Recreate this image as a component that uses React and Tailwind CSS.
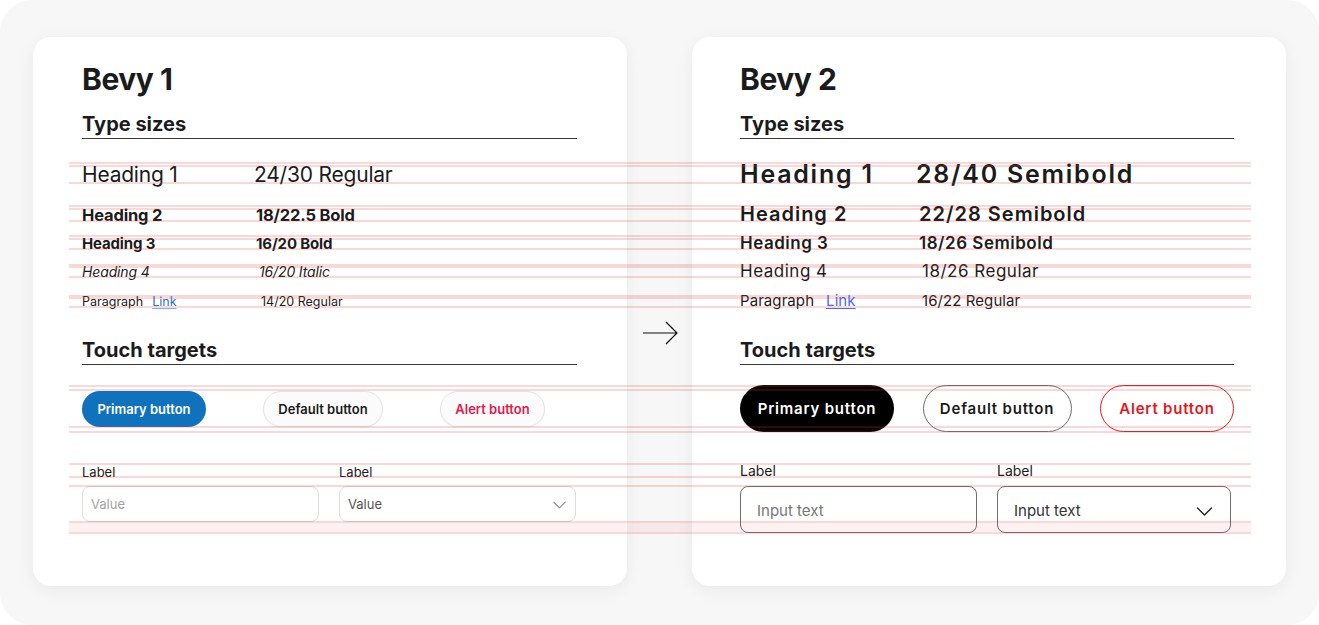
import React from 'react';

// Guide lines laid over both cards (y positions in page pixels)
const guides = [162, 165, 182, 205, 208, 220, 235, 238, 248, 264, 266, 276, 295, 297, 306, 385, 389, 426, 431, 463, 476, 485, 521, 532];

function Chevron({ className }) {
  return (
    <svg viewBox="0 0 16 9" fill="none" className={className}>
      <path d="M1 1l7 7 7-7" stroke="currentColor" strokeWidth="1.4" strokeLinecap="round" strokeLinejoin="round" />
    </svg>
  );
}

function Bevy1() {
  return (
    <div className="w-[594px] h-[549px] shrink-0 rounded-[18px] bg-white shadow-[0_4px_18px_rgba(0,0,0,0.06)] pl-[49px] pr-[50px] pt-[24px] text-[#1b1b1b]">
      <h1 className="text-[30px] leading-[36px] font-bold tracking-[-0.015em]">Bevy 1</h1>
      <h2 className="mt-[15px] text-[20px] leading-[24px] font-bold pb-[2px] border-b border-[#3a3a3a]">Type sizes</h2>

      <div className="mt-[21px] flex text-[21px] leading-[30px] tracking-[-0.01em]">
        <span className="w-[172px]">Heading 1</span>
        <span>24/30 Regular</span>
      </div>
      <div className="mt-[14px] flex text-[16.5px] leading-[22px] font-bold tracking-[-0.01em]">
        <span className="w-[174px]">Heading 2</span>
        <span>18/22.5 Bold</span>
      </div>
      <div className="mt-[7.5px] flex text-[15px] leading-[20px] font-bold tracking-[-0.01em]">
        <span className="w-[174px]">Heading 3</span>
        <span>16/20 Bold</span>
      </div>
      <div className="mt-[8.5px] flex text-[14px] leading-[20px] italic tracking-[-0.01em]">
        <span className="w-[177px]">Heading 4</span>
        <span>16/20 Italic</span>
      </div>
      <div className="mt-[11px] flex text-[12.5px] leading-[18px]">
        <span className="w-[179px]">
          Paragraph
          <a className="ml-[9px] text-[#1f74c4] underline underline-offset-2 decoration-[#7fb1e0]">Link</a>
        </span>
        <span>14/20 Regular</span>
      </div>

      <h2 className="mt-[27px] text-[20px] leading-[24px] font-bold pb-[2px] border-b border-[#3a3a3a]">Touch targets</h2>

      <div className="mt-[26px] flex gap-[57px]">
        <button className="w-[124px] h-[36px] rounded-full bg-[#1071bd] text-white text-[13px] font-semibold pt-[2px]">Primary button</button>
        <button className="w-[120px] h-[36px] rounded-full bg-[#fbfbfb] border border-[#e4e4e4] shadow-[0_1px_2px_rgba(0,0,0,0.04)] text-[#1b1b1b] text-[13px] font-semibold pt-[2px]">Default button</button>
        <button className="w-[105px] h-[36px] rounded-full bg-[#fbfbfb] border border-[#e4e4e4] shadow-[0_1px_2px_rgba(0,0,0,0.04)] text-[#e3184c] text-[13px] font-semibold pt-[2px]">Alert button</button>
      </div>

      <div className="mt-[37px] grid grid-cols-[237px_237px] gap-x-[20px]">
        <div>
          <div className="text-[13px] leading-[16px]">Label</div>
          <div className="mt-[6px] h-[36px] rounded-[8px] border border-[#dedede] flex items-center pl-[8px] pt-[2px] text-[13px] text-[#a3a3a3]">Value</div>
        </div>
        <div>
          <div className="text-[13px] leading-[16px]">Label</div>
          <div className="mt-[6px] h-[36px] rounded-[8px] border border-[#dedede] flex items-center justify-between pl-[8px] pr-[9px] pt-[2px] text-[13px] text-[#555]">
            <span>Value</span>
            <Chevron className="w-[13px] h-[8px] text-[#8a8a8a]" />
          </div>
        </div>
      </div>
    </div>
  );
}

function Bevy2() {
  return (
    <div className="w-[594px] h-[549px] shrink-0 rounded-[18px] bg-white shadow-[0_4px_18px_rgba(0,0,0,0.06)] pl-[48px] pr-[52px] pt-[24px] text-[#1b1b1b]">
      <h1 className="text-[30px] leading-[36px] font-bold tracking-[-0.015em]">Bevy 2</h1>
      <h2 className="mt-[15px] text-[20px] leading-[24px] font-bold pb-[2px] border-b border-[#3a3a3a]">Type sizes</h2>

      <div className="mt-[18px] flex text-[25px] leading-[34px] font-semibold tracking-[0.07em]">
        <span className="w-[176px]">Heading 1</span>
        <span>28/40 Semibold</span>
      </div>
      <div className="mt-[10px] flex text-[20px] leading-[26px] font-semibold tracking-[0.05em]">
        <span className="w-[179px]">Heading 2</span>
        <span>22/28 Semibold</span>
      </div>
      <div className="mt-[5px] flex text-[17px] leading-[22px] font-semibold tracking-[0.03em]">
        <span className="w-[179px]">Heading 3</span>
        <span>18/26 Semibold</span>
      </div>
      <div className="mt-[6px] flex text-[17px] leading-[22px] tracking-[0.03em]">
        <span className="w-[182px]">Heading 4</span>
        <span>18/26 Regular</span>
      </div>
      <div className="mt-[9px] flex text-[15px] leading-[20px] tracking-[0.005em]">
        <span className="w-[182px]">
          Paragraph
          <a className="ml-[12px] text-[#4a6bf5] underline underline-offset-2">Link</a>
        </span>
        <span>16/22 Regular</span>
      </div>

      <h2 className="mt-[27px] text-[20px] leading-[24px] font-bold pb-[2px] border-b border-[#3a3a3a]">Touch targets</h2>

      <div className="mt-[20px] flex justify-between tracking-[0.05em]">
        <button className="w-[154px] h-[47px] rounded-full bg-black text-white text-[15px] font-semibold pt-[2px]">Primary button</button>
        <button className="w-[149px] h-[47px] rounded-full bg-white border border-[#6e6e6e] text-[#1b1b1b] text-[15px] font-semibold pt-[2px]">Default button</button>
        <button className="w-[134px] h-[47px] rounded-full bg-white border border-[#e4161c] text-[#e4161c] text-[15px] font-semibold pt-[2px]">Alert button</button>
      </div>

      <div className="mt-[30px] grid grid-cols-[237px_234px] gap-x-[20px]">
        <div>
          <div className="text-[14px] leading-[18px]">Label</div>
          <div className="mt-[6px] h-[47px] rounded-[8px] border border-[#6e6e6e] flex items-center pl-[16px] pt-[3px] text-[15px] text-[#777]">Input text</div>
        </div>
        <div>
          <div className="text-[14px] leading-[18px]">Label</div>
          <div className="mt-[6px] h-[47px] rounded-[8px] border border-[#6e6e6e] flex items-center justify-between pl-[16px] pr-[17px] pt-[3px] text-[15px] text-[#333]">
            <span>Input text</span>
            <Chevron className="w-[17px] h-[9px] text-[#222]" />
          </div>
        </div>
      </div>
    </div>
  );
}

export default function App() {
  return (
    <div className="w-[1319px] h-[625px] bg-white font-['Inter',_sans-serif]">
      <div className="relative h-full rounded-[32px] bg-[#f7f7f7] flex pl-[33px] pt-[37px] overflow-hidden">
        <Bevy1 />
        <div className="w-[65px] shrink-0 flex justify-center pt-[284px]">
          <svg width="36" height="24" viewBox="0 0 36 24" fill="none">
            <path d="M1 12h34M24 1l11 11-11 11" stroke="#111" strokeWidth="1.2" />
          </svg>
        </div>
        <Bevy2 />

        <div className="absolute inset-0 pointer-events-none">
          {guides.map((y) => (
            <div key={y} className="absolute left-[69px] w-[1182px] h-[2px] bg-[rgba(230,60,60,0.2)]" style={{ top: y }} />
          ))}
          <div className="absolute left-[69px] w-[1182px] top-[523px] h-[9px] bg-[rgba(230,60,60,0.07)]" />
        </div>
      </div>
    </div>
  );
}
